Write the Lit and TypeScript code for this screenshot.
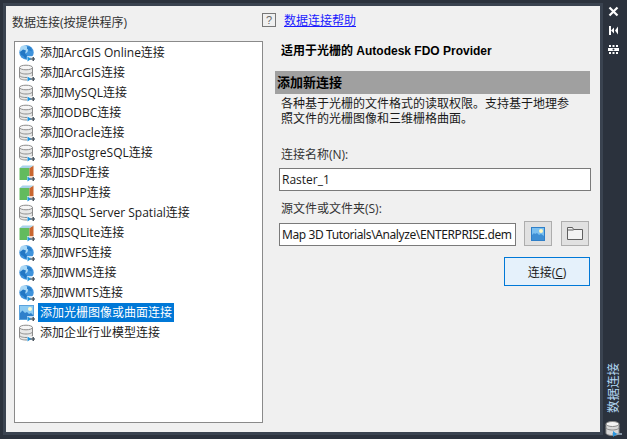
import { LitElement, css, html, svg } from 'lit';
import { customElement } from 'lit/decorators.js';

type IconKind = 'globe' | 'db' | 'sdf' | 'raster';

const ROWS: { icon: IconKind; label: string; selected?: boolean }[] = [
  { icon: 'globe', label: '添加ArcGIS Online连接' },
  { icon: 'db', label: '添加ArcGIS连接' },
  { icon: 'db', label: '添加MySQL连接' },
  { icon: 'db', label: '添加ODBC连接' },
  { icon: 'db', label: '添加Oracle连接' },
  { icon: 'db', label: '添加PostgreSQL连接' },
  { icon: 'sdf', label: '添加SDF连接' },
  { icon: 'sdf', label: '添加SHP连接' },
  { icon: 'db', label: '添加SQL Server Spatial连接' },
  { icon: 'sdf', label: '添加SQLite连接' },
  { icon: 'globe', label: '添加WFS连接' },
  { icon: 'globe', label: '添加WMS连接' },
  { icon: 'globe', label: '添加WMTS连接' },
  { icon: 'raster', label: '添加光栅图像或曲面连接', selected: true },
  { icon: 'db', label: '添加企业行业模型连接' },
];

// little blue/grey "add connection" arrow shared by every list icon
const plug = svg`
  <path d="M8 11h9v6H8z" fill="#fff" opacity=".75" />
  <path d="M10 14h6" stroke="#66717c" stroke-width="1.6" />
  <path d="M8.500 11.500v5l3.500-2.500z" fill="#1f93dc" />
  <path d="M13.500 12h1.500v4h-1.500z" fill="#4f5a65" />
`;

function listIcon(kind: IconKind) {
  let body;
  if (kind === 'globe') {
    body = svg`
      <circle cx="7.500" cy="7.500" r="7.200" fill="#3f93dc" />
      <circle cx="5" cy="4.500" r="4" fill="#a9d8f6" />
      <path d="M1 7l3-2.500 3 1-1 3 2 2-1.500 3.500-2-3-2.500-1z" fill="#2277c4" />
      <path d="M8 1.500l4 1 1 4-3-1-2-2z" fill="#2a80cc" />
    `;
  } else if (kind === 'db') {
    body = svg`
      <path d="M.5 2.500v10C.5 14 3.300 15 7 15s6.500-1 6.500-2.500v-10z" fill="#e8e8e8" stroke="#8c8c8c" />
      <ellipse cx="7" cy="2.500" rx="6.500" ry="2.300" fill="#f6f6f6" stroke="#8c8c8c" />
      <path d="M.5 6.500C.5 8 3.300 9 7 9s6.500-1 6.500-2.500M.5 10C.5 11.500 3.300 12.500 7 12.500s6.500-1 6.500-2.500" fill="none" stroke="#8c8c8c" />
    `;
  } else if (kind === 'sdf') {
    body = svg`
      <path d="M.500 3h10v12H.500z" fill="#63bb5e" />
      <path d="M10.500 3l4-2.500v12l-4 2.500z" fill="#c9652f" />
      <path d="M.500 3l3-2.500h11l-4 2.500z" fill="#a8d2ea" />
    `;
  } else {
    body = svg`
      <rect x=".5" y=".5" width="14" height="14" fill="#8ccbf3" stroke="#5aa2dc" />
      <circle cx="11" cy="4" r="2" fill="#fffbd0" />
      <path d="M1 14V8l2.500-2.500L6 8l2-1 2 2 2-1 2 2v4z" fill="#2f80cb" />
    `;
  }
  return html`<svg class="row-icon" width="17" height="19" viewBox="0 0 17 19">
    <g transform="translate(0 2)">${body}${plug}</g>
  </svg>`;
}

@customElement('app-root')
export class AppRoot extends LitElement {
  render() {
    return html`
      <div class="window">
        <main class="panel">
          <section class="left">
            <div class="list-title">数据连接(按提供程序)</div>
            <div class="list">
              ${ROWS.map(
                (r) => html`
                  <div class="row">
                    ${listIcon(r.icon)}
                    <span class="row-label ${r.selected ? 'selected' : ''}">${r.label}</span>
                  </div>
                `
              )}
            </div>
          </section>

          <section class="right">
            <div class="help">
              <span class="help-box">?</span>
              <a class="help-link">数据连接帮助</a>
            </div>
            <div class="provider">适用于光栅的 Autodesk FDO Provider</div>
            <div class="band">添加新连接</div>
            <p class="desc">各种基于光栅的文件格式的读取权限。支持基于地理参<br />照文件的光栅图像和三维栅格曲面。</p>

            <label class="name-label">连接名称(N):</label>
            <div class="input wide">Raster_1</div>

            <label class="source-label">源文件或文件夹(S):</label>
            <div class="source">
              <div class="input path">Map 3D Tutorials\\Analyze\\ENTERPRISE.dem</div>
              <button class="tool">
                <svg width="14" height="14" viewBox="0 0 14 14">
                  <rect width="14" height="14" fill="#2f7fc8" />
                  <rect x="1" y="1" width="12" height="8" fill="#7cc0f0" />
                  <circle cx="10" cy="4" r="2" fill="#fdf6c0" />
                  <path d="M1 13V8l2-2 1 1 2-1 2 2 2-1 3 2v4z" fill="#3f8fd4" />
                </svg>
              </button>
              <button class="tool">
                <svg width="16" height="13" viewBox="0 0 16 13">
                  <path d="M.5 12.500V.5h5l1 2h9v10z" fill="#f2f2f2" stroke="#5f5f5f" />
                  <path d="M.5 3h6" stroke="#5f5f5f" />
                </svg>
              </button>
            </div>
            <div class="actions">
              <button class="connect">连接(<u>C</u>)</button>
            </div>
          </section>
        </main>

        <aside class="strip">
          <div class="strip-top">
            <svg width="11" height="11" viewBox="0 0 11 11">
              <path d="M1.500 1.500l8 8M9.500 1.500l-8 8" stroke="#fff" stroke-width="2.200" />
            </svg>
            <svg width="11" height="11" viewBox="0 0 11 11">
              <path d="M1 1h2v9H1z" fill="#fff" />
              <path d="M3 5.500L6 2.500v6z" fill="#fff" />
              <path d="M10 1.500v8L7 5.500z" fill="#fff" />
            </svg>
            <svg width="11" height="11" viewBox="0 0 11 11">
              <path d="M1 1h2v2H1zM4.500 1h2v2h-2zM8 1h2v2H8zM1 8h2v2H1zM4.500 8h2v2h-2zM8 8h2v2H8zM0 4h11v3H0z" fill="#fff" />
              <circle cx="5.500" cy="5.500" r="1" fill="#2b323d" />
            </svg>
          </div>
          <div class="strip-bottom">
            <span class="strip-text">数据连接</span>
            <svg width="18" height="17" viewBox="0 0 18 17">
              <path d="M1 3v9c0 1.500 3 2.500 6.500 2.500S14 13.500 14 12V3z" fill="#d8d8d8" stroke="#8a8a8a" />
              <ellipse cx="7.500" cy="3" rx="6.500" ry="2.500" fill="#f4f4f4" stroke="#8a8a8a" />
              <path d="M1 6.500c0 1.500 3 2.500 6.500 2.500S14 8 14 6.500" fill="none" stroke="#8a8a8a" />
              <path d="M7 13h10" stroke="#9fb0bf" stroke-width="1.600" />
              <path d="M8 10v6l4-3z" fill="#2a97e0" />
            </svg>
          </div>
        </aside>
      </div>
    `;
  }

  static styles = css`
    :host {
      display: block;
      width: 627px;
      height: 439px;
      overflow: hidden;
      font-family: 'Open Sans', 'Noto Sans CJK SC', sans-serif;
      font-size: 12px;
      color: #1a1a1a;
    }

    .window {
      display: flex;
      width: 627px;
      height: 439px;
      box-sizing: border-box;
      padding: 6px 0 7px 6px;
      background: #2b323d;
    }

    .panel {
      flex: none;
      width: 594px;
      display: flex;
      box-sizing: border-box;
      background: #f0f0f0;
      padding: 0 10px 0 8px;
      box-shadow: 0 0 0 3px #3a4350;
    }

    .left {
      flex: none;
      width: 249px;
      display: flex;
      flex-direction: column;
    }

    .list-title {
      height: 35px;
      padding-top: 8px;
      margin-left: -2px;
      box-sizing: border-box;
      line-height: 18px;
      color: #333;
    }

    .list {
      flex: none;
      height: 382px;
      box-sizing: border-box;
      background: #fff;
      border: 1px solid #8a8a8a;
      padding-left: 4px;
    }

    .row {
      display: flex;
      align-items: center;
      height: 20px;
    }

    .row-icon {
      flex: none;
      margin: 1px 2px 0 0;
    }

    .row-label {
      height: 19px;
      line-height: 19px;
      padding: 0 2px;
      white-space: nowrap;
    }

    .row-label.selected {
      background: #0078d7;
      color: #fff;
    }

    .right {
      flex: 1;
      min-width: 0;
      margin-left: 12px;
    }

    .help {
      display: flex;
      align-items: center;
      height: 27px;
      box-sizing: border-box;
      margin-left: -13px;
    }

    .help-box {
      width: 14px;
      height: 14px;
      box-sizing: border-box;
      border: 1px solid #777;
      text-align: center;
      font: 11px/12px 'Liberation Sans', sans-serif;
      color: #666;
      margin-right: 8px;
    }

    .help-link {
      color: #1a1aff;
      text-decoration: underline;
    }

    .provider {
      height: 38px;
      padding: 9px 0 0 6px;
      box-sizing: border-box;
      font-family: 'Liberation Sans', 'Noto Sans CJK SC', sans-serif;
      font-weight: 700;
      color: #000;
      line-height: 18px;
    }

    .band {
      height: 23px;
      line-height: 23px;
      background: #a0a0a0;
      padding-left: 2px;
      font-size: 13px;
      font-weight: 700;
      color: #000;
    }

    .desc {
      margin: 2px 0 0;
      padding-left: 6px;
      line-height: 15px;
      color: #1a1a1a;
      height: 50px;
    }

    .name-label,
    .source-label {
      display: block;
      padding-left: 6px;
      line-height: 18px;
      color: #333;
    }

    .name-label {
      height: 22px;
    }

    .input {
      height: 23px;
      box-sizing: border-box;
      background: #fff;
      border: 1px solid #7a7a7a;
      line-height: 21px;
      padding-left: 2px;
      overflow: hidden;
      white-space: nowrap;
      color: #1a1a1a;
    }

    .wide {
      width: 312px;
      margin-left: 4px;
    }

    .source-label {
      margin-top: 9px;
      height: 21px;
    }

    .source {
      display: flex;
      align-items: flex-end;
      margin-left: 4px;
    }

    .path {
      width: 237px;
      font-family: 'Noto Sans', sans-serif;
      letter-spacing: -0.4px;
    }

    .tool {
      display: flex;
      align-items: center;
      justify-content: center;
      width: 28px;
      height: 25px;
      padding: 0;
      box-sizing: border-box;
      background: #e1e1e1;
      border: 1px solid #adadad;
      margin-left: 8px;
    }

    .tool + .tool {
      margin-left: 9px;
    }

    .actions {
      display: flex;
      justify-content: flex-end;
      width: 315px;
      margin-top: 11px;
    }

    .connect {
      width: 86px;
      height: 29px;
      padding: 0;
      background: #e5f1fb;
      border: 1px solid #0078d7;
      font: inherit;
      color: #1a1a1a;
    }

    .strip {
      flex: 1;
      display: flex;
      flex-direction: column;
      justify-content: space-between;
      align-items: center;
    }

    .strip-top {
      display: flex;
      flex-direction: column;
      align-items: center;
      gap: 8px;
    }

    .strip-bottom {
      display: flex;
      flex-direction: column;
      align-items: center;
      gap: 8px;
      margin-bottom: -6px;
    }

    .strip-text {
      writing-mode: vertical-rl;
      text-orientation: sideways;
      transform: rotate(180deg);
      color: #b4d8f4;
      font-size: 12.500px;
      line-height: 14px;
    }
  `;
}

declare global {
  interface HTMLElementTagNameMap {
    'app-root': AppRoot;
  }
}
